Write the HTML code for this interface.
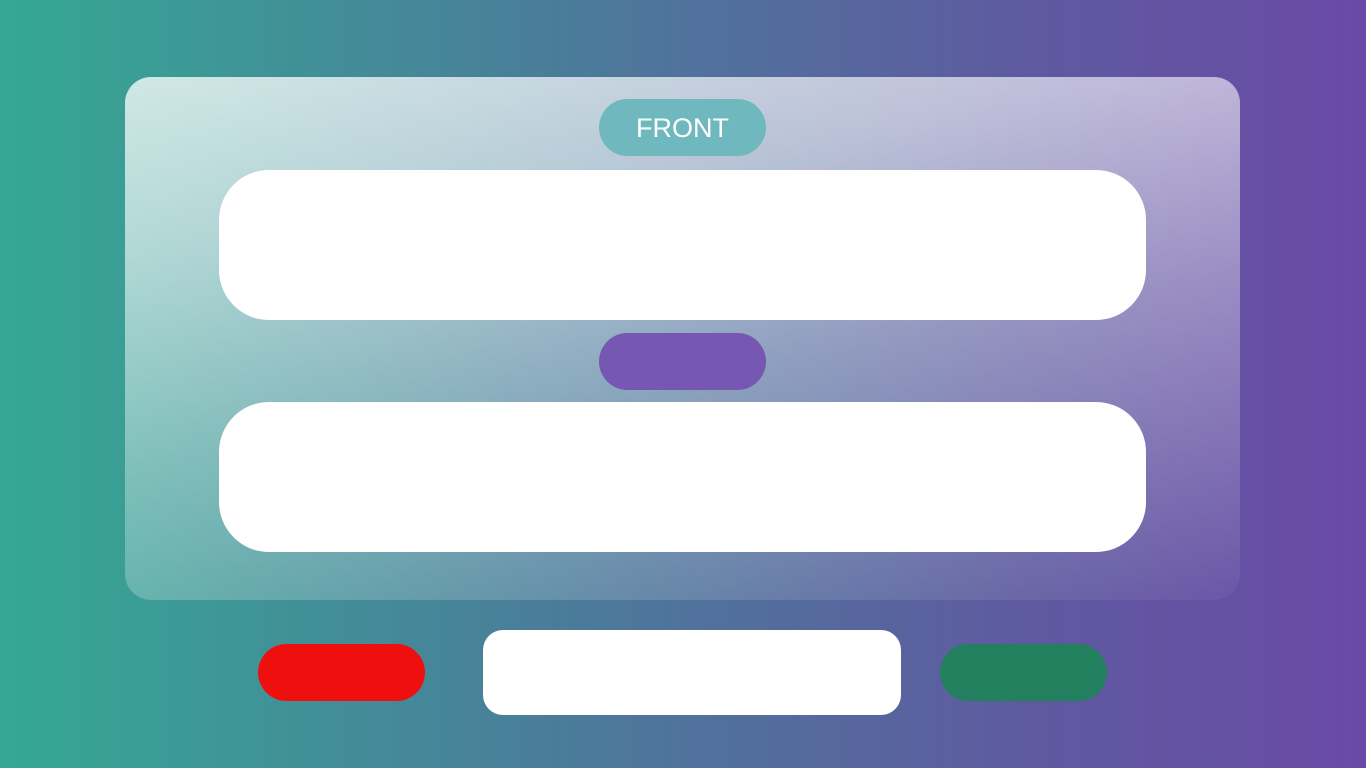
<!DOCTYPE html>
<html><head><style>
html,body{margin:0;padding:0;}
body{width:1366px;height:768px;position:relative;overflow:hidden;background:linear-gradient(to right,#35a894 0%,#4a7d9a 40%,#5e5aa0 75%,#6a4aa6 100%);font-family:"Liberation Sans",sans-serif;}
.card{position:absolute;left:125px;top:77px;width:1115px;height:523px;border-radius:26px;background:linear-gradient(170deg,rgba(255,255,255,0.76) 0%,rgba(255,255,255,0.6) 25%,rgba(255,255,255,0.35) 55%,rgba(255,255,255,0.04) 100%);}
.pill{position:absolute;width:167px;height:57px;border-radius:29px;}
.box{position:absolute;left:219px;width:927px;height:150px;background:#fff;border-radius:50px;}
</style></head><body>
<div class="card"></div>
<div class="pill" style="left:599px;top:99px;background:#6fb8bd;color:#fff;font-size:27px;text-align:center;line-height:58px;">FRONT</div>
<div class="box" style="top:170px"></div>
<div class="pill" style="left:599px;top:333px;background:#7657b2"></div>
<div class="box" style="top:402px"></div>
<div class="pill" style="left:258px;top:644px;background:#f00f0f"></div>
<div style="position:absolute;left:483px;top:630px;width:418px;height:85px;background:#fff;border-radius:20px;"></div>
<div class="pill" style="left:940px;top:644px;background:#23805e"></div>
</body></html>
